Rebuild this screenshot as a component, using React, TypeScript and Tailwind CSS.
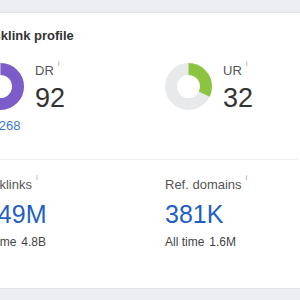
import React from "react";

const font = { fontFamily: '"Liberation Sans", Arial, sans-serif' };

function Donut({ value, color }: { value: number; color: string }) {
  const r = 17.5;
  const c = 2 * Math.PI * r;
  return (
    <svg width="47" height="47" viewBox="0 0 47 47" className="shrink-0">
      <circle cx="23.5" cy="23.5" r={r} fill="none" stroke="#e8e9eb" strokeWidth="12" />
      <circle
        cx="23.5"
        cy="23.5"
        r={r}
        fill="none"
        stroke={color}
        strokeWidth="12"
        strokeDasharray={`${(c * value) / 100} ${c}`}
        transform="rotate(-90 23.5 23.5)"
      />
    </svg>
  );
}

function Info() {
  return <span className="ml-[4px] -mt-[3px] text-[8px] leading-[8px] text-[#a3a7ad]">i</span>;
}

function Rating({ label, value, percent, color, rank }: { label: string; value: string; percent: number; color: string; rank?: string }) {
  return (
    <div className="flex gap-[11px] items-start">
      <div className="flex flex-col">
        <Donut value={percent} color={color} />
        {rank && (
          <div className="mt-[8px] text-[13px] leading-[16px] whitespace-nowrap">
            <span className="text-[#666]">AR </span>
            <span className="text-[#3b78d0]">{rank}</span>
          </div>
        )}
      </div>
      <div className="flex flex-col">
        <div className="flex items-start text-[13px] leading-[16px] text-[#555]">
          {label}
          <Info />
        </div>
        <div className="mt-[3px] text-[27px] leading-[32px] text-[#333]">{value}</div>
      </div>
    </div>
  );
}

function Metric({ label, value, total }: { label: string; value: string; total: string }) {
  return (
    <div className="flex flex-col whitespace-nowrap">
      <div className="flex items-start text-[13px] leading-[16px] text-[#555]">
        {label}
        <Info />
      </div>
      <div className="mt-[6px] text-[25px] leading-[30px] text-[#1f5fc2]">{value}</div>
      <div className="mt-[5px] flex gap-[5px] text-[12px] leading-[16px] text-[#444]">
        <span>All time</span>
        <span>{total}</span>
      </div>
    </div>
  );
}

export default function App() {
  return (
    <div className="w-[300px] h-[300px] overflow-hidden bg-[#eceef1] pt-[12px]" style={font}>
      <div className="-ml-[40px] w-[355px] h-[277px] bg-white border-y border-[#e3e5e8] px-[17px]">
        <h2 className="pt-[15px] text-[13px] leading-[16px] font-bold text-[#333]">Backlink profile</h2>
        <div className="mt-[19px] grid grid-cols-[188px_1fr] h-[96px]">
          <Rating label="DR" value="92" percent={92} color="#7b5cc9" rank="268" />
          <Rating label="UR" value="32" percent={32} color="#8cc43f" />
        </div>
        <div className="border-t border-[#eceef0] pt-[17px] grid grid-cols-[188px_1fr]">
          <Metric label="Backlinks" value="1.49M" total="4.8B" />
          <Metric label="Ref. domains" value="381K" total="1.6M" />
        </div>
      </div>
    </div>
  );
}
